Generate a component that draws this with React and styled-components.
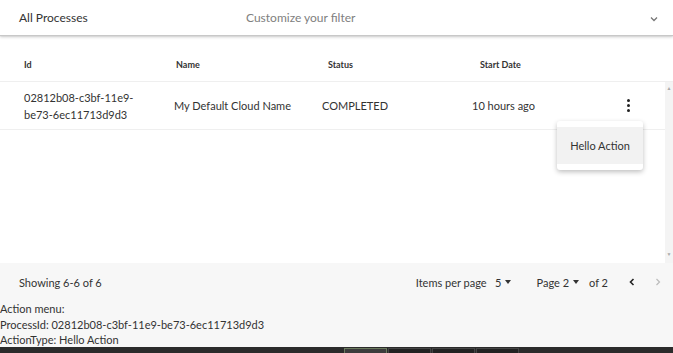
import React from 'react';
import styled, { createGlobalStyle } from 'styled-components';

const Global = createGlobalStyle`
  html, body {
    margin: 0;
    padding: 0;
    background: #f7f7f7;
    font-family: Lato, "Open Sans", sans-serif;
    color: #333;
  }
`;

const Page = styled.div`
  width: 673px;
  height: 353px;
  display: flex;
  flex-direction: column;
  overflow: hidden;
  position: relative;
`;

const FilterBar = styled.div`
  height: 35px;
  flex-shrink: 0;
  background: #fff;
  display: flex;
  align-items: center;
  padding: 0 12px 0 19px;
  font-size: 12px;
  border-bottom: 1px solid #c8c8c8;
  box-shadow: 0 1px 3px rgba(0, 0, 0, 0.2);
  position: relative;
  z-index: 1;
`;

const FilterTitle = styled.span`
  width: 227px;
  color: #333;
`;

const FilterHint = styled.span`
  flex: 1;
  color: #808080;
`;

const Chevron = styled.svg`
  width: 10px;
  height: 10px;
  margin-top: 3px;
  margin-right: 2px;
`;

const TableWrap = styled.div`
  background: #fff;
  margin-top: 1px;
  display: flex;
  flex-direction: column;
  height: 226px;
  flex-shrink: 0;
  position: relative;
`;

const HeaderRow = styled.div`
  display: grid;
  grid-template-columns: 152px 152px 152px 152px 1fr;
  padding-left: 24px;
  height: 45px;
  box-sizing: border-box;
  padding-top: 10px;
  align-items: center;
  font-size: 9px;
  font-weight: 700;
  color: #333;
  border-bottom: 1px solid #efefef;
`;

const BodyArea = styled.div`
  flex: 1;
  display: flex;
`;

const Rows = styled.div`
  flex: 1;
`;

const Row = styled.div`
  display: grid;
  grid-template-columns: 150px 148px 150px 156px 1fr;
  padding-left: 24px;
  height: 47px;
  align-items: center;
  font-size: 11px;
  color: #333;
  border-bottom: 1px solid #efefef;
  line-height: 17px;
`;

const Kebab = styled.div`
  display: flex;
  flex-direction: column;
  align-items: center;
  gap: 1.6px;
  width: 3px;
  margin-left: -1px;
  span {
    width: 3px;
    height: 3px;
    border-radius: 50%;
    background: #222;
  }
`;

const ScrollTrack = styled.div`
  width: 8px;
  background: #f4f4f4;
  display: flex;
  flex-direction: column;
  justify-content: space-between;
  align-items: center;
  padding: 3px 0 6px;
  font-size: 5px;
  color: #aaa;
`;

const Menu = styled.div`
  position: absolute;
  left: 557px;
  top: 84px;
  width: 86px;
  padding: 6px 0;
  background: #fff;
  border-radius: 3px;
  box-shadow: 0 2px 5px rgba(0, 0, 0, 0.25);
`;

const MenuItem = styled.div`
  height: 37px;
  display: flex;
  align-items: center;
  justify-content: center;
  font-size: 11px;
  color: #333;
  background: #f2f2f2;
`;

const Pager = styled.div`
  height: 38px;
  flex-shrink: 0;
  display: flex;
  align-items: center;
  padding: 0 10px 0 19px;
  font-size: 11px;
  color: #333;
`;

const PagerInfo = styled.span`
  flex: 1;
`;

const PagerGroup = styled.span`
  display: flex;
  align-items: center;
  margin-right: ${(p) => p.gap}px;
`;

const Caret = styled.span`
  display: inline-block;
  width: 0;
  height: 0;
  border-left: 3.5px solid transparent;
  border-right: 3.5px solid transparent;
  border-top: 4px solid #333;
  margin-left: 4px;
`;

const NavArrow = styled.svg`
  width: 10px;
  height: 10px;
  margin-left: ${(p) => p.ml}px;
`;

const Log = styled.div`
  font-size: 11px;
  color: #333;
  line-height: 15.5px;
`;

const Taskbar = styled.div`
  position: absolute;
  left: 0;
  right: 0;
  bottom: 0;
  height: 6px;
  background: #2b2b2b;
  display: flex;
  padding-left: 344px;
  gap: 1px;
`;

const TaskTab = styled.div`
  width: 41px;
  margin-top: 1px;
  border: 1px solid ${(p) => (p.active ? '#6b7a5e' : '#444')};
  border-bottom: none;
  background: ${(p) => (p.active ? '#3c3c3c' : '#222')};
`;

export default function App() {
  return (
    <Page>
      <Global />
      <FilterBar>
        <FilterTitle>All Processes</FilterTitle>
        <FilterHint>Customize your filter</FilterHint>
        <Chevron viewBox="0 0 10 10">
          <path d="M2 3.5 L5 6.5 L8 3.5" fill="none" stroke="#777" strokeWidth="1.3" />
        </Chevron>
      </FilterBar>
      <TableWrap>
        <HeaderRow>
          <span>Id</span>
          <span>Name</span>
          <span>Status</span>
          <span>Start Date</span>
          <span />
        </HeaderRow>
        <BodyArea>
          <Rows>
            <Row>
              <span>
                02812b08-c3bf-11e9-
                <br />
                be73-6ec11713d9d3
              </span>
              <span>My Default Cloud Name</span>
              <span>COMPLETED</span>
              <span>10 hours ago</span>
              <Kebab>
                <span />
                <span />
                <span />
              </Kebab>
            </Row>
          </Rows>
          <ScrollTrack>
            <span>▲</span>
            <span>▼</span>
          </ScrollTrack>
        </BodyArea>
        <Menu>
          <MenuItem>Hello Action</MenuItem>
        </Menu>
      </TableWrap>
      <Pager>
        <PagerInfo>Showing 6-6 of 6</PagerInfo>
        <PagerGroup gap={25}>
          Items per page&nbsp;&nbsp;&nbsp;5<Caret />
        </PagerGroup>
        <PagerGroup gap={10}>
          Page 2<Caret />
        </PagerGroup>
        <PagerGroup gap={0}>of 2</PagerGroup>
        <NavArrow viewBox="0 0 10 10" ml={19}>
          <path d="M6.5 2 L3.5 5 L6.5 8" fill="none" stroke="#222" strokeWidth="1.6" />
        </NavArrow>
        <NavArrow viewBox="0 0 10 10" ml={16}>
          <path d="M3.5 2 L6.5 5 L3.5 8" fill="none" stroke="#bbb" strokeWidth="1.2" />
        </NavArrow>
      </Pager>
      <Log>
        <div>Action menu:</div>
        <div>ProcessId: 02812b08-c3bf-11e9-be73-6ec11713d9d3</div>
        <div>ActionType: Hello Action</div>
      </Log>
      <Taskbar>
        <TaskTab active />
        <TaskTab />
        <TaskTab />
        <TaskTab />
      </Taskbar>
    </Page>
  );
}
